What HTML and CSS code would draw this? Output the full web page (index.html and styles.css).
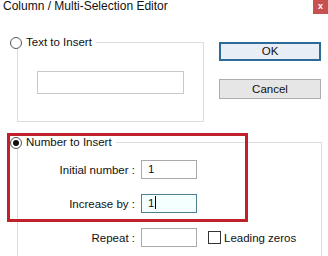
FILE: index.html
```html
<!DOCTYPE html>
<html lang="en">
<head>
<meta charset="UTF-8">
<title>Column / Multi-Selection Editor</title>
<link rel="stylesheet" href="styles.css">
</head>
<body>
<div class="dialog">
    <div class="titlebar">
        <span class="title">Column / Multi-Selection Editor</span>
        <span class="close">x</span>
    </div>

    <div class="main">
        <div class="left">
            <div class="group group-text">
                <label class="legend"><span class="radio"></span>Text to Insert</label>
                <div class="textbox wide"></div>
            </div>
        </div>
        <div class="buttons">
            <div class="btn btn-default">OK</div>
            <div class="btn">Cancel</div>
        </div>
    </div>

    <div class="group group-number">
        <label class="legend"><span class="radio checked"></span>Number to Insert</label>
        <div class="row">
            <span class="lbl">Initial number :</span>
            <div class="textbox">1</div>
        </div>
        <div class="row">
            <span class="lbl">Increase by :</span>
            <div class="textbox focused">1<span class="caret"></span></div>
        </div>
        <div class="row">
            <span class="lbl">Repeat :</span>
            <div class="textbox"></div>
            <span class="check"></span>
            <span class="check-lbl">Leading zeros</span>
        </div>
    </div>

    <div class="highlight"></div>
</div>
</body>
</html>
```

FILE: styles.css
```css
body {
    margin: 0;
    padding: 0;
    background: #fff;
    font-family: "Liberation Sans", Arial, sans-serif;
    font-size: 11.5px;
    color: #111;
}

.dialog {
    position: relative;
    width: 328px;
    height: 256px;
    overflow: hidden;
    background: #fff;
}

.titlebar {
    display: flex;
    justify-content: space-between;
    height: 15px;
}

.title {
    padding-left: 3px;
    font-size: 12px;
    line-height: 13px;
}

.close {
    width: 15px;
    height: 14px;
    background: #c75050;
    color: #fff;
    font-size: 9px;
    font-weight: bold;
    line-height: 12px;
    text-align: center;
}

.main {
    display: flex;
    padding-top: 27px;
}

.left {
    padding-left: 17px;
}

.group {
    position: relative;
    border: 1px solid #dcdcdc;
    box-sizing: border-box;
}

.group-text {
    width: 187px;
    height: 80px;
    padding: 28px 0 0 19px;
}

.legend {
    position: absolute;
    left: -8px;
    top: -7px;
    display: flex;
    align-items: center;
    padding-right: 4px;
    background: #fff;
    line-height: 13px;
}

.radio {
    width: 10px;
    height: 10px;
    margin-right: 4px;
    border: 1px solid #555;
    border-radius: 50%;
    background: #fff;
    position: relative;
}

.radio.checked::after {
    content: "";
    position: absolute;
    left: 2px;
    top: 2px;
    width: 6px;
    height: 6px;
    border-radius: 50%;
    background: #111;
}

.textbox {
    width: 56px;
    height: 19px;
    box-sizing: border-box;
    border: 1px solid #aaa;
    padding-left: 6px;
    line-height: 17px;
    background: #fff;
}

.textbox.wide {
    width: 147px;
    height: 23px;
    border-color: #c8c8c8;
}

.textbox.focused {
    border-color: #4f7f8f;
    background: #f4ffff;
}

.caret {
    display: inline-block;
    width: 1px;
    height: 13px;
    margin-left: 1px;
    vertical-align: -2px;
    background: #000;
}

.buttons {
    display: flex;
    flex-direction: column;
    gap: 18px;
    padding-left: 15px;
}

.btn {
    width: 102px;
    height: 20px;
    box-sizing: border-box;
    border: 1px solid #adadad;
    background: #e6e6e6;
    text-align: center;
    line-height: 18px;
}

.btn-default {
    height: 19px;
    border: 2px solid #2c6a97;
    background: #e8eef6;
    line-height: 15px;
}

.group-number {
    margin: 20px 0 0 17px;
    width: 305px;
    height: 140px;
    padding-top: 17px;
    border-bottom: none;
}

.row {
    display: flex;
    align-items: center;
    height: 19px;
    margin-bottom: 15px;
}

.lbl {
    width: 117px;
    text-align: right;
    margin-right: 6px;
}

.check {
    width: 11px;
    height: 11px;
    margin-left: 11px;
    margin-right: 3px;
    border: 1px solid #333;
    background: #fff;
}

.highlight {
    position: absolute;
    left: 7px;
    top: 133px;
    width: 241px;
    height: 89px;
    box-sizing: border-box;
    border: 3px solid #c0202a;
}
```
